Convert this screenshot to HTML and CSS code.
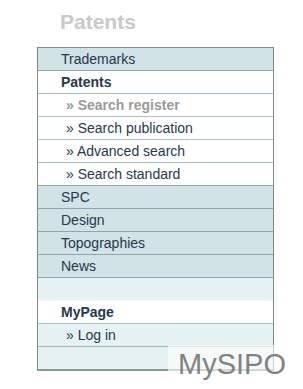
FILE: index.html
```html
<!DOCTYPE html>
<html>
<head>
<meta charset="utf-8">
<link rel="stylesheet" href="styles.css">
</head>
<body>
<h1 class="title">Patents</h1>
<ul class="menu">
  <li class="item blue">Trademarks</li>
  <li class="item white head">Patents</li>
  <li class="item white sub current">» Search register</li>
  <li class="item white sub">» Search publication</li>
  <li class="item white sub">» Advanced search</li>
  <li class="item white sub last-white">» Search standard</li>
  <li class="item blue">SPC</li>
  <li class="item blue">Design</li>
  <li class="item blue">Topographies</li>
  <li class="item blue">News</li>
  <li class="item pale nosep"></li>
  <li class="item white head">MyPage</li>
  <li class="item pale sub">» Log in</li>
  <li class="item pale nosep"></li>
</ul>
<div class="brand"><span class="brand-text">MySIPO</span></div>
</body>
</html>
```

FILE: styles.css
```css
html, body {
  margin: 0;
  padding: 0;
  background: #ffffff;
}
body {
  width: 303px;
  height: 389px;
  overflow: hidden;
  position: relative;
  font-family: "Liberation Sans", Arial, sans-serif;
}
.title {
  margin: 0;
  padding: 10px 0 0 60px;
  font-size: 21px;
  line-height: 24px;
  font-weight: bold;
  color: #c9c9c9;
}
.menu {
  list-style: none;
  margin: 13px 0 0 37px;
  padding: 0;
  width: 235px;
  border-top: 1px solid #7f8f90;
  border-left: 1px solid #7a8a8b;
  border-right: 1px solid #7a8a8b;
  border-bottom: 2px solid #8a9999;
}
.item {
  height: 22px;
  line-height: 22px;
  font-size: 14px;
  color: #27384a;
  padding-left: 23px;
  border-bottom: 1px solid #8fa6ab;
  white-space: nowrap;
}
.blue {
  background: #d2e3e7;
}
.white {
  background: #ffffff;
  border-bottom-color: #a8c2c7;
}
.white.last-white {
  border-bottom-color: #8fa6ab;
}
.pale {
  background: #e6f1f3;
  border-bottom-color: #9fb6ba;
}
.head {
  font-weight: bold;
}
.sub {
  padding-left: 28px;
}
.current {
  color: #9a9a9a;
  font-weight: bold;
}
.nosep {
  border-bottom-color: transparent;
}
.menu .item:nth-child(11) {
  border-bottom: 1px solid #f2f8f9;
}
.menu .item:last-child {
  border-bottom: none;
}
.brand {
  position: absolute;
  left: 168px;
  top: 345px;
  width: 135px;
  height: 27px;
  background: rgba(255, 255, 255, 0.6);
}
.brand-text {
  position: absolute;
  left: 10px;
  top: 3px;
  font-size: 29px;
  line-height: 32px;
  color: #828282;
}
```
